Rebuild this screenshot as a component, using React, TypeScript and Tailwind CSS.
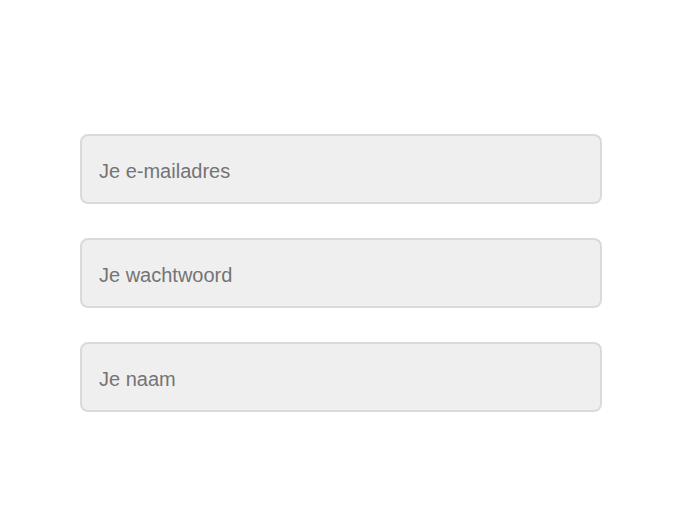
const fields = ["Je e-mailadres", "Je wachtwoord", "Je naam"];

export default function App() {
  return (
    <div className="min-h-screen bg-white pt-[134px] font-['Liberation_Sans',Arial,sans-serif]">
      <div className="ml-[80px] flex w-[522px] flex-col gap-[34px]">
        {fields.map((label) => (
          <div
            key={label}
            className="flex h-[70px] items-center rounded-[8px] border-2 border-[#dadada] bg-[#efefef] pl-[17px] pt-[4px] text-[20px] text-[#747474]"
          >
            {label}
          </div>
        ))}
      </div>
    </div>
  );
}
